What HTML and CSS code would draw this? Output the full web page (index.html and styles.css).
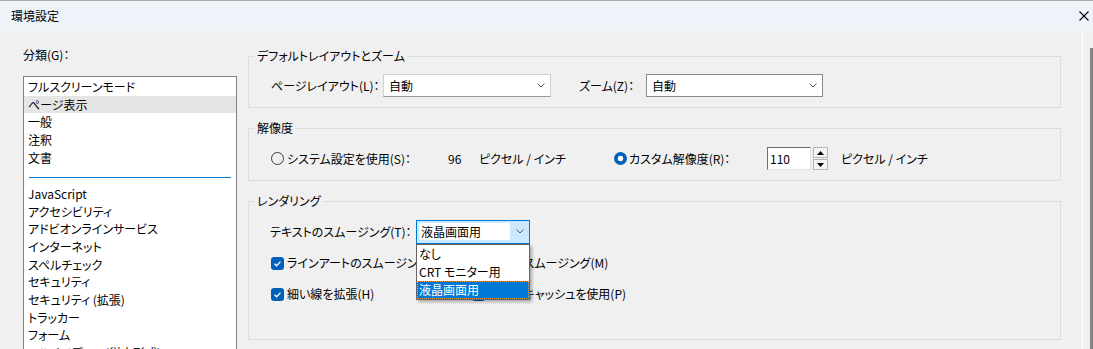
FILE: index.html
```html
<!DOCTYPE html>
<html lang="ja">
<head>
    <meta charset="UTF-8">
    <title>環境設定</title>
    <link rel="stylesheet" href="styles.css">
</head>
<body>

    <div class="titlebar">
        <span class="title">環境設定</span>
        <svg class="close" width="10" height="10" viewBox="0 0 10 10">
            <path d="M0.5 0.5 L9.5 9.5 M9.5 0.5 L0.5 9.5" stroke="#000" stroke-width="1.1" fill="none"/>
        </svg>
    </div>

    <div class="content">
        <div class="sidebar">
            <div class="side-label">分類(G)：</div>
            <ul class="category-list">
                <li>フルスクリーンモード</li>
                <li class="selected">ページ表示</li>
                <li>一般</li>
                <li>注釈</li>
                <li>文書</li>
                <li class="sep"></li>
                <li>JavaScript</li>
                <li>アクセシビリティ</li>
                <li>アドビオンラインサービス</li>
                <li>インターネット</li>
                <li>スペルチェック</li>
                <li>セキュリティ</li>
                <li>セキュリティ (拡張)</li>
                <li>トラッカー</li>
                <li>フォーム</li>
                <li>マルチメディア (従来形式)</li>
            </ul>
        </div>

        <div class="panel">
            <fieldset class="group">
                <legend>デフォルトレイアウトとズーム</legend>
                <div class="group-body first">
                    <div class="row">
                        <span class="label label-layout">ページレイアウト(L)：</span>
                        <div class="combo combo-layout">
                            <span>自動</span>
                            <svg class="chevron" width="8" height="5" viewBox="0 0 8 5"><path d="M0.5 0.5 L4 4 L7.5 0.5" stroke="#555" fill="none"/></svg>
                        </div>
                        <span class="label label-zoom">ズーム(Z)：</span>
                        <div class="combo combo-zoom">
                            <span>自動</span>
                            <svg class="chevron" width="8" height="5" viewBox="0 0 8 5"><path d="M0.5 0.5 L4 4 L7.5 0.5" stroke="#555" fill="none"/></svg>
                        </div>
                    </div>
                </div>
            </fieldset>

            <fieldset class="group">
                <legend>解像度</legend>
                <div class="group-body">
                    <div class="row">
                        <span class="radio"></span>
                        <span class="label label-system">システム設定を使用(S)：</span>
                        <span class="value">96</span>
                        <span class="unit unit-first">ピクセル / インチ</span>
                        <span class="radio checked"></span>
                        <span class="label label-custom">カスタム解像度(R)：</span>
                        <div class="number">110</div>
                        <div class="spinner">
                            <div class="spin-btn"><svg width="7" height="4" viewBox="0 0 7 4"><path d="M0 4 L3.5 0 L7 4 Z" fill="#000"/></svg></div>
                            <div class="spin-btn"><svg width="7" height="4" viewBox="0 0 7 4"><path d="M0 0 L3.5 4 L7 0 Z" fill="#000"/></svg></div>
                        </div>
                        <span class="unit unit-second">ピクセル / インチ</span>
                    </div>
                </div>
            </fieldset>

            <fieldset class="group group-render">
                <legend>レンダリング</legend>
                <div class="group-body">
                    <div class="row">
                        <span class="label label-smooth">テキストのスムージング(T)：</span>
                        <div class="combo-wrap">
                            <div class="combo combo-focus">
                                <span class="combo-text">液晶画面用</span>
                                <svg class="chevron" width="8" height="5" viewBox="0 0 8 5"><path d="M0.5 0.5 L4 4 L7.5 0.5" stroke="#555" fill="none"/></svg>
                            </div>
                            <ul class="dropdown">
                                <li>なし</li>
                                <li>CRT モニター用</li>
                                <li class="active">液晶画面用</li>
                            </ul>
                        </div>
                    </div>
                    <div class="check-row">
                        <span class="check-item">
                            <span class="checkbox"><svg width="13" height="13" viewBox="0 0 13 13"><path d="M3.5 6.8 L5.6 8.8 L9.5 4.6" stroke="#fff" stroke-width="1.3" fill="none"/></svg></span>
                            ラインアートのスムージング(S)
                        </span>
                        <span class="check-item">
                            <span class="checkbox"><svg width="13" height="13" viewBox="0 0 13 13"><path d="M3.5 6.8 L5.6 8.8 L9.5 4.6" stroke="#fff" stroke-width="1.3" fill="none"/></svg></span>
                            画像のスムージング(M)
                        </span>
                    </div>
                    <div class="check-row">
                        <span class="check-item">
                            <span class="checkbox"><svg width="13" height="13" viewBox="0 0 13 13"><path d="M3.5 6.8 L5.6 8.8 L9.5 4.6" stroke="#fff" stroke-width="1.3" fill="none"/></svg></span>
                            細い線を拡張(H)
                        </span>
                        <span class="check-item">
                            <span class="checkbox"><svg width="13" height="13" viewBox="0 0 13 13"><path d="M3.5 6.8 L5.6 8.8 L9.5 4.6" stroke="#fff" stroke-width="1.3" fill="none"/></svg></span>
                            ページキャッシュを使用(P)
                        </span>
                    </div>
                </div>
            </fieldset>
        </div>

        <div class="edge">
            <div class="edge-line"></div>
            <div class="edge-bar"></div>
        </div>
    </div>

</body>
</html>
```

FILE: styles.css
```css
* {
    box-sizing: border-box;
}

body {
    margin: 0;
    width: 1093px;
    height: 349px;
    overflow: hidden;
    background-color: #f0f0f0;
    font-family: "Noto Sans CJK JP", "Noto Sans", sans-serif;
    font-size: 12px;
    line-height: 16px;
    color: #000;
    font-feature-settings: "palt";
}

.titlebar {
    height: 31px;
    background-color: #eef3fa;
    border-top: 1px solid #a8a8a8;
    display: flex;
    align-items: center;
    justify-content: space-between;
    padding: 0 4px 0 11px;
}

.close {
    display: block;
}

.content {
    display: flex;
    height: 318px;
}

/* left category list */
.sidebar {
    width: 248px;
    padding: 16px 0 0 23px;
}

.side-label {
    margin-bottom: 13px;
}

.category-list {
    width: 214px;
    height: 320px;
    margin: 0;
    padding: 1px 0 0;
    list-style: none;
    background-color: #fff;
    border: 1px solid #828282;
}

    .category-list li {
        height: 17.65px;
        line-height: 17.65px;
        padding-left: 4px;
        white-space: nowrap;
    }

    .category-list li.selected {
        background-color: #e5e5e5;
    }

    .category-list li.sep {
        height: auto;
        padding: 11px 5px 7px;
    }

        .category-list li.sep::before {
            content: "";
            display: block;
            height: 1px;
            background-color: #0078d4;
        }

/* right panel */
.panel {
    width: 813px;
    padding-top: 17px;
}

.group {
    margin: 0 0 12px;
    padding: 0;
    min-width: 0;
    border: 1px solid #dcdcdc;
}

    .group legend {
        margin-left: 6px;
        padding: 0 2px;
        line-height: 16px;
    }

.group-body {
    padding: 11px 0 10px 22px;
}

    .group-body.first {
        padding-top: 10px;
    }

.group-render .group-body {
    padding-bottom: 35px;
}

.row {
    display: flex;
    align-items: center;
    height: 23px;
    white-space: nowrap;
}

.label-layout { width: 112px; }
.label-zoom { width: 67px; margin-left: 28px; }
.label-system { width: 161px; }
.label-custom { width: 138px; }
.label-smooth { width: 146px; margin-left: -1px; }

.value { width: 31px; }
.unit-first { width: 135px; }
.unit-second { margin-left: 13px; }

.combo {
    height: 23px;
    display: flex;
    align-items: center;
    justify-content: space-between;
    padding: 0 5px 0 5px;
    background-color: #fff;
    border: 1px solid #d0d0d0;
    border-bottom-color: #9a9a9a;
}

.combo-layout { width: 168px; }

.combo-zoom {
    width: 177px;
    border-color: #8a8a8a;
}

.chevron {
    display: block;
}

/* radio buttons */
.radio {
    width: 13px;
    height: 13px;
    margin-right: 3px;
    border: 1px solid #3a3a3a;
    border-radius: 50%;
}

    .radio.checked {
        margin-right: 2px;
        border: none;
        background: radial-gradient(circle, #fff 0 2.6px, #005fb8 3.1px);
    }

/* number field */
.number {
    width: 44px;
    height: 23px;
    padding: 3px 0 0 2px;
    background-color: #fff;
    border: 1px solid;
    border-color: #6e6e6e #e3e3e3 #e3e3e3 #6e6e6e;
}

.spinner {
    width: 15px;
    height: 23px;
    margin-left: 2px;
    display: flex;
    flex-direction: column;
    gap: 1px;
}

.spin-btn {
    flex: 1;
    display: flex;
    align-items: center;
    justify-content: center;
    background-color: #f5f5f5;
    border: 1px solid #b5b5b5;
}

    .spin-btn svg {
        display: block;
    }

/* focused combo with its open list */
.combo-wrap {
    position: relative;
}

.combo-focus {
    width: 114px;
    height: 24px;
    padding: 0 5px 0 2px;
    background-color: #cce8ff;
    border: 1px solid #0078d7;
}

.combo-text {
    width: 91px;
    height: 17px;
    line-height: 17px;
    padding-left: 2px;
    background-color: #fff;
}

.dropdown {
    position: absolute;
    top: 24px;
    left: 0;
    width: 114px;
    margin: 0;
    padding: 0;
    list-style: none;
    background-color: #fff;
    border: 1px solid #646464;
    box-shadow: 2px 2px 3px rgba(0, 0, 0, 0.3);
    z-index: 2;
}

    .dropdown li {
        height: 18px;
        line-height: 18px;
        padding-left: 2px;
    }

    .dropdown li.active {
        color: #fff;
        background-color: #0078d7;
        outline: 1px dotted #f0a040;
        outline-offset: -1px;
    }

/* checkboxes */
.check-row {
    display: flex;
    align-items: center;
    height: 20px;
    margin-top: 10px;
    white-space: nowrap;
}

    .check-row + .check-row {
        margin-top: 11px;
    }

.check-item {
    display: flex;
    align-items: center;
    width: 201px;
}

.checkbox {
    width: 13px;
    height: 13px;
    margin-right: 3px;
    border-radius: 3px;
    background-color: #005fb8;
}

    .checkbox svg {
        display: block;
    }

/* right edge of the dialog */
.edge {
    flex: 1;
    position: relative;
}

.edge-line {
    position: absolute;
    left: 21px;
    top: 0;
    bottom: 0;
    width: 1px;
    background-color: #fff;
}

.edge-bar {
    position: absolute;
    left: 29px;
    top: 17px;
    bottom: 0;
    width: 3px;
    background-color: #858585;
}
```
